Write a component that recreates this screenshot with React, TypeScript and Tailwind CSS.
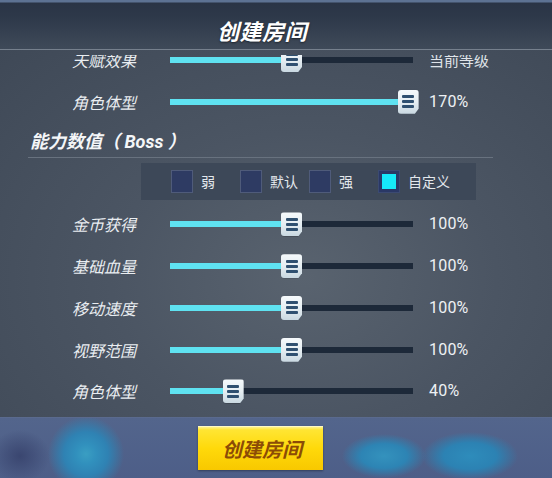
import React from "react";

type SliderRow = { label: string; pct: number; value: string };

const topRows: SliderRow[] = [
  { label: "天赋效果", pct: 50, value: "当前等级" },
  { label: "角色体型", pct: 98, value: "170%" },
];

const bossRows: SliderRow[] = [
  { label: "金币获得", pct: 50, value: "100%" },
  { label: "基础血量", pct: 50, value: "100%" },
  { label: "移动速度", pct: 50, value: "100%" },
  { label: "视野范围", pct: 50, value: "100%" },
  { label: "角色体型", pct: 26, value: "40%" },
];

const presets = [
  { label: "弱", checked: false },
  { label: "默认", checked: false },
  { label: "强", checked: false },
  { label: "自定义", checked: true },
];

const cjk = "font-['Noto_Sans_CJK_SC','Noto_Sans',sans-serif]";

function Thumb() {
  return (
    <div className="w-[21px] h-[24px] rounded-[3px] bg-gradient-to-b from-[#f6fafc] via-[#e6eef2] to-[#c9d8e1] shadow-[1px_1px_2px_rgba(0,0,0,0.45)] flex flex-col items-center justify-center gap-[2px] [clip-path:polygon(0_0,100%_0,100%_80%,82%_100%,0_100%)]">
      <div className="w-[12px] h-[3px] rounded-[1px] bg-[#2f5070]" />
      <div className="w-[12px] h-[3px] rounded-[1px] bg-[#2f5070]" />
      <div className="w-[12px] h-[3px] rounded-[1px] bg-[#2f5070]" />
    </div>
  );
}

function Row({ label, pct, value }: SliderRow) {
  const numeric = /\d/.test(value);
  return (
    <div className="flex items-center h-[41.75px]">
      <div className={`w-[136px] text-right italic text-[16px] leading-none text-[#e9edf1] ${cjk}`}>{label}</div>
      <div className="ml-[34px] w-[243px] h-[6px] bg-[#1d2939] relative">
        <div className="h-full bg-[#5fe2f1]" style={{ width: `${pct}%` }} />
        <div className="absolute top-1/2 -translate-y-1/2" style={{ left: `calc(${pct}% - 10.5px)` }}>
          <Thumb />
        </div>
      </div>
      <div
        className={`ml-[16px] leading-none ${
          numeric
            ? "text-[16px] text-[#eef1f4] font-['Roboto','Noto_Sans',sans-serif] tracking-[0.2px]"
            : `text-[15px] text-[#dfe3e8] ${cjk}`
        }`}
      >
        {value}
      </div>
    </div>
  );
}

export default function App() {
  return (
    <div className="w-[552px] h-[478px] overflow-hidden flex flex-col bg-[#46505e]">
      {/* title bar */}
      <div className="h-[50px] shrink-0 border-b border-[#76808d] bg-[linear-gradient(to_bottom,#5d7293_0px,#5d7293_2px,#2a3446_3px,#2e394a_18px,#3f4a59_49px)] flex items-center pl-[217px] pt-[10px]">
        <div className={`text-[22px] font-bold italic leading-none text-white tracking-[0.5px] [text-shadow:0_1px_2px_rgba(0,0,0,0.5)] ${cjk}`}>
          创建房间
        </div>
      </div>

      {/* settings list */}
      <div className="flex-1 bg-[radial-gradient(ellipse_at_55%_62%,#59636f_0%,#4b5563_45%,#3f4957_100%)] pt-[5px] flex flex-col">
        <div className="flex-1 overflow-hidden">
          <div className="-mt-[16px] flex flex-col">
            {topRows.map((r, i) => (
              <Row key={i} {...r} />
            ))}

            <div className="ml-[28px] w-[465px] h-[35px] border-b border-[#68727f] flex items-center pt-[3px] pl-[2px]">
              <div className={`text-[18px] font-bold italic leading-none text-[#f4f6f8] ${cjk}`}>
                能力数值（<span className="font-['Roboto',sans-serif]"> Boss </span>）
              </div>
            </div>

            <div className="ml-[141px] mt-[5px] w-[335px] h-[37px] bg-[#3d4858] flex items-center pl-[30px]">
              {presets.map((p) => (
                <div key={p.label} className="w-[69px] flex items-center gap-[8px]">
                  <div
                    className={`w-[22px] h-[23px] shrink-0 border ${
                      p.checked ? "border-[#3b4a72] bg-[#2a3866] p-[3px]" : "border-[#4f5b7a] bg-[#2e3b63]"
                    }`}
                  >
                    {p.checked && <div className="w-full h-full bg-[#16e8fa]" />}
                  </div>
                  <span className={`text-[14px] leading-none text-[#e3e7ec] whitespace-nowrap ${cjk}`}>{p.label}</span>
                </div>
              ))}
            </div>

            <div className="mt-[4px] flex flex-col">
              {bossRows.map((r, i) => (
                <Row key={i} {...r} />
              ))}
            </div>
          </div>
        </div>
      </div>

      {/* bottom action bar */}
      <div className="h-[61px] shrink-0 border-t border-[#5a6a8e] bg-[radial-gradient(circle_at_86px_36px,#3a9ec2_0px,#3190bd_10px,#2f82b3_22px,rgba(48,110,170,0)_38px),radial-gradient(ellipse_42px_22px_at_384px_38px,#3492bd_0%,#2d84b4_55%,rgba(48,110,170,0)_100%),radial-gradient(ellipse_48px_24px_at_470px_38px,#2e8cbb_0%,#2c82b3_55%,rgba(48,110,170,0)_100%),radial-gradient(ellipse_30px_26px_at_20px_38px,#3a4670_0%,rgba(58,70,112,0)_100%),linear-gradient(to_bottom,#53658c,#4d5e88)] pl-[198px] pt-[8px]">
        <div className="w-[125px] h-[44px] bg-[linear-gradient(to_bottom,#fff38a_0px,#ffe533_3px,#ffd90a_50%,#f8c800_100%)] border-t border-[#fff9c4] shadow-[0_1px_2px_rgba(0,0,0,0.35)] flex items-center justify-center pl-[3px]">
          <span className={`text-[20px] font-bold italic leading-none text-[#8c4c06] ${cjk}`}>创建房间</span>
        </div>
      </div>
    </div>
  );
}
